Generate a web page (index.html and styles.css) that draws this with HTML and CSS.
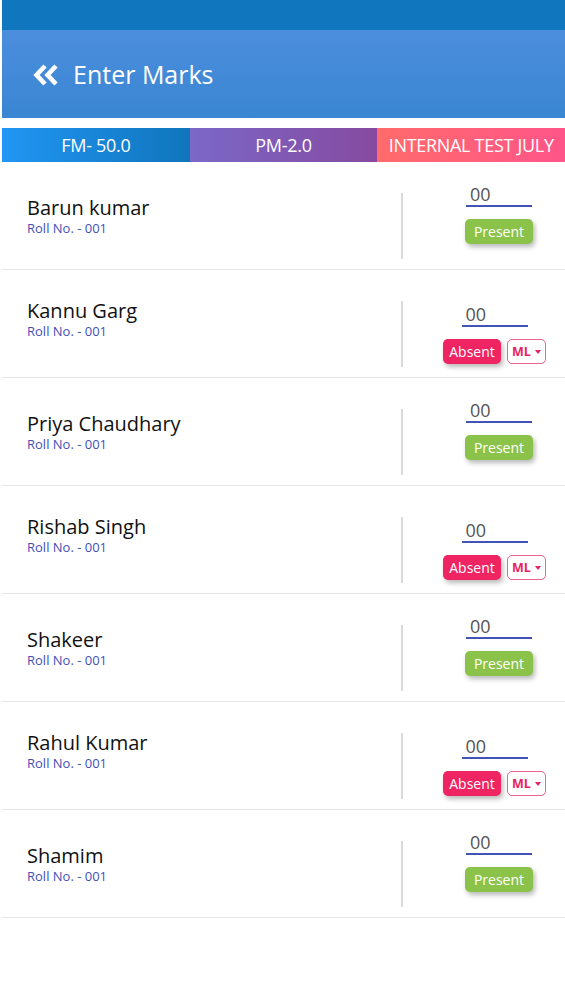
FILE: index.html
```html
<!DOCTYPE html>
<html>
<head>
<meta charset="utf-8">
<link rel="stylesheet" href="styles.css">
</head>
<body>
<div class="app">
  <div class="statusbar"></div>
  <header class="header">
    <svg class="back" viewBox="0 0 26 22" width="26" height="22">
      <polyline points="12,2 3.5,11 12,20" fill="none" stroke="#fff" stroke-width="4.6"/>
      <polyline points="23,2 14.5,11 23,20" fill="none" stroke="#fff" stroke-width="4.6"/>
    </svg>
    <h1 class="title">Enter Marks</h1>
  </header>
  <div class="tabs">
    <div class="tab tab-fm">FM- 50.0</div>
    <div class="tab tab-pm">PM-2.0</div>
    <div class="tab tab-test">INTERNAL TEST JULY</div>
  </div>
  <div class="list">
    <div class="row">
      <div class="info"><div class="name">Barun kumar</div><div class="roll">Roll No. - 001</div></div>
      <div class="divider"></div>
      <div class="marks"><div class="input">00</div><div class="btns"><span class="btn present">Present</span></div></div>
    </div>
    <div class="row absent">
      <div class="info"><div class="name">Kannu Garg</div><div class="roll">Roll No. - 001</div></div>
      <div class="divider"></div>
      <div class="marks"><div class="input">00</div><div class="btns"><span class="btn absent-btn">Absent</span><span class="ml">ML<span class="caret"></span></span></div></div>
    </div>
    <div class="row">
      <div class="info"><div class="name">Priya Chaudhary</div><div class="roll">Roll No. - 001</div></div>
      <div class="divider"></div>
      <div class="marks"><div class="input">00</div><div class="btns"><span class="btn present">Present</span></div></div>
    </div>
    <div class="row absent">
      <div class="info"><div class="name">Rishab Singh</div><div class="roll">Roll No. - 001</div></div>
      <div class="divider"></div>
      <div class="marks"><div class="input">00</div><div class="btns"><span class="btn absent-btn">Absent</span><span class="ml">ML<span class="caret"></span></span></div></div>
    </div>
    <div class="row">
      <div class="info"><div class="name">Shakeer</div><div class="roll">Roll No. - 001</div></div>
      <div class="divider"></div>
      <div class="marks"><div class="input">00</div><div class="btns"><span class="btn present">Present</span></div></div>
    </div>
    <div class="row absent">
      <div class="info"><div class="name">Rahul Kumar</div><div class="roll">Roll No. - 001</div></div>
      <div class="divider"></div>
      <div class="marks"><div class="input">00</div><div class="btns"><span class="btn absent-btn">Absent</span><span class="ml">ML<span class="caret"></span></span></div></div>
    </div>
    <div class="row">
      <div class="info"><div class="name">Shamim</div><div class="roll">Roll No. - 001</div></div>
      <div class="divider"></div>
      <div class="marks"><div class="input">00</div><div class="btns"><span class="btn present">Present</span></div></div>
    </div>
  </div>
</div>
</body>
</html>
```

FILE: styles.css
```css
* { box-sizing: border-box; }
html, body { margin: 0; padding: 0; background: #fff; }
body { font-family: "Open Sans", "Noto Sans", sans-serif; }
.app { margin-left: 2px; width: 563px; }
.statusbar { height: 30px; background: #1077bf; }
.header {
  height: 88px;
  background: linear-gradient(180deg, #4b8edd 0%, #3a86d3 100%);
  display: flex;
  align-items: center;
  padding-left: 31px;
}
.back { display: block; margin-right: 14px; margin-top: 1px; }
.title { margin: 0; color: #fff; font-weight: 400; font-size: 25px; line-height: 30px; }
.tabs { margin-top: 10px; height: 34px; display: flex; }
.tab {
  flex: 1;
  display: flex;
  align-items: center;
  justify-content: center;
  color: #fff;
  font-size: 18px;
  letter-spacing: -0.3px;
}
.tab-fm { background: linear-gradient(90deg, #2196f3 0%, #1075bc 100%); }
.tab-pm { background: linear-gradient(90deg, #7b68c8 0%, #864aa0 100%); }
.tab-test { background: linear-gradient(90deg, #ff6b6b 0%, #ff5589 100%); }
.row {
  display: flex;
  align-items: flex-start;
  height: 108px;
  border-bottom: 1px solid #e6e6e6;
  padding-left: 25px;
}
.info { flex: 1; padding-top: 33px; }
.row.absent .info { padding-top: 28px; }
.name { font-size: 20px; line-height: 25px; color: #111; }
.roll { font-size: 13px; line-height: 16px; color: #3f51b5; }
.divider { width: 2px; height: 66px; margin-top: 31px; background: #dadada; }
.marks {
  width: 162px;
  padding-left: 30px;
  padding-top: 21px;
  display: flex;
  flex-direction: column;
  align-items: center;
}
.row.absent .marks { padding-top: 33px; padding-right: 9px; }
.input {
  width: 66px;
  height: 24px;
  padding-left: 4px;
  font-size: 18px;
  line-height: 22px;
  color: #555;
  border-bottom: 2px solid #4352b6;
}
.btns { margin-top: 12px; display: flex; gap: 6px; }
.btn {
  display: flex;
  align-items: center;
  justify-content: center;
  height: 25px;
  border-radius: 5px;
  color: #fff;
  font-size: 14px;
  box-shadow: 2px 3px 5px rgba(0, 0, 0, 0.28);
}
.present { width: 68px; background: #8bc34a; }
.absent-btn { width: 58px; background: #ef2462; }
.ml {
  width: 39px;
  height: 25px;
  border: 1.5px solid #f0608c;
  border-radius: 5px;
  display: flex;
  align-items: center;
  justify-content: center;
  gap: 4px;
  color: #e91e63;
  font-size: 12.5px;
  font-weight: 700;
}
.caret {
  width: 0;
  height: 0;
  border-left: 3.5px solid transparent;
  border-right: 3.5px solid transparent;
  border-top: 4px solid #e91e63;
}
```
